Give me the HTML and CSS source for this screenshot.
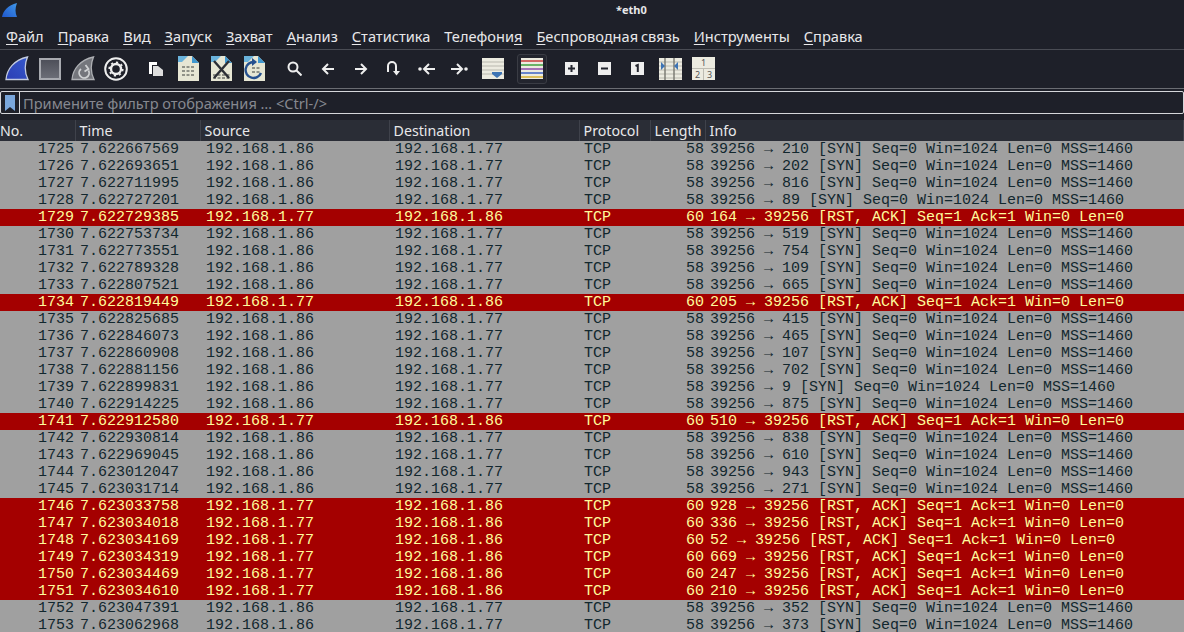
FILE: index.html
```html
<!DOCTYPE html>
<html lang="ru">
<head>
<meta charset="utf-8">
<title>*eth0</title>
<link rel="stylesheet" href="styles.css">
</head>
<body>
<div class="app">
  <header class="titlebar">
    <svg class="logo" width="16" height="15" viewBox="0 0 16 15"><defs><linearGradient id="lg" x1="0" y1="1" x2="1" y2="0"><stop offset="0" stop-color="#1f56cc"/><stop offset="1" stop-color="#3f97e8"/></linearGradient></defs><path d="M0 14C1 8 6 2 15 0C13 5 13 10 15 14Z" fill="url(#lg)"/></svg>
    <span class="title">*eth0</span>
  </header>
  <nav class="menubar">
    <span><u>Ф</u>айл</span><span><u>П</u>равка</span><span><u>В</u>ид</span><span><u>З</u>апуск</span><span><u>З</u>ахват</span><span><u>А</u>нализ</span><span><u>С</u>татистика</span><span>Телефони<u>я</u></span><span><u>Б</u>еспроводная связь</span><span><u>И</u>нструменты</span><span><u>С</u>правка</span>
  </nav>
  <div class="toolbar">
    <span class="tool"><svg width="24" height="25" viewBox="0 0 24 25"><defs><linearGradient id="fin" x1="0" y1="1" x2="1" y2="0"><stop offset="0" stop-color="#2c3fb4"/><stop offset="1" stop-color="#3558cc"/></linearGradient></defs><path d="M1 23.500C2 13 9 4 22.500 1C19.500 8 19.500 16 23 23.500Z" fill="url(#fin)" stroke="#c3cbe0" stroke-width="1.300"/></svg></span>
    <span class="tool"><svg width="22" height="22" viewBox="0 0 22 22"><defs><linearGradient id="stop" x1="0" y1="0" x2="0" y2="1"><stop offset="0" stop-color="#4c4e58"/><stop offset="1" stop-color="#6d6f78"/></linearGradient></defs><rect x="1" y="1" width="20" height="20" fill="url(#stop)" stroke="#a8aab0" stroke-width="2"/></svg></span>
    <span class="tool"><svg width="24" height="25" viewBox="0 0 24 25"><path d="M1 23.500C2 13 9 4 22.500 1C19.500 8 19.500 16 23 23.500Z" fill="#74767c" stroke="#aeb0b4" stroke-width="1.300"/><path d="M10 13a5 5 0 1 0 7.500 1.500M14.500 9l3 4-4 2.500" fill="none" stroke="#d0d2d4" stroke-width="1.800"/></svg></span>
    <span class="tool"><svg width="24" height="24" viewBox="0 0 24 24"><circle cx="12" cy="12" r="10.800" fill="none" stroke="#eee" stroke-width="2"/><circle cx="12" cy="12" r="5" fill="none" stroke="#eee" stroke-width="2.400"/><circle cx="12" cy="12" r="6.800" fill="none" stroke="#eee" stroke-width="1.600" stroke-dasharray="2.200 3.100"/></svg></span>
    <span class="tool sep"><svg width="16" height="16" viewBox="0 0 16 16"><path d="M1 1H9V4H4V13H1Z" fill="#fff"/><path d="M5 5H10L15 9V15H5Z" fill="#ddd"/></svg></span>
    <span class="tool"><svg width="21" height="25" viewBox="0 0 21 25"><path d="M0 0H14L21 7V25H0Z" fill="#e6e6d4"/><path d="M14 0L21 7H14Z" fill="#3f97cf"/><path d="M0 0H10L4 6H0Z" fill="#6ab3dc"/><path d="M4 11h13M4 15h13M4 19h13" stroke="#8f9187" stroke-width="2" stroke-dasharray="3 1.500"/></svg></span>
    <span class="tool"><svg width="21" height="25" viewBox="0 0 21 25"><path d="M0 0H14L21 7V25H0Z" fill="#e6e6d4"/><path d="M14 0L21 7H14Z" fill="#3f97cf"/><path d="M0 0H10L4 6H0Z" fill="#6ab3dc"/><path d="M2 19h17M2 22h17" stroke="#8f9187" stroke-width="2" stroke-dasharray="3 1.500"/><path d="M3 5L18 22M18 5L3 22" stroke="#2c2f36" stroke-width="2.400"/></svg></span>
    <span class="tool"><svg width="21" height="25" viewBox="0 0 21 25"><path d="M0 0H14L21 7V25H0Z" fill="#e6e6d4"/><path d="M14 0L21 7H14Z" fill="#3f97cf"/><path d="M0 0H10L4 6H0Z" fill="#6ab3dc"/><path d="M8 12h9M8 16h9" stroke="#8f9187" stroke-width="2" stroke-dasharray="3 1.500"/><path d="M10 6a8 8 0 1 0 7 11" fill="none" stroke="#25508f" stroke-width="2.400"/><path d="M8 2l5 4-5 4Z" fill="#25508f"/></svg></span>
    <span class="tool sep"><svg width="15" height="15" viewBox="0 0 15 15"><circle cx="6" cy="6" r="4.500" fill="none" stroke="#eee" stroke-width="2"/><path d="M9.500 9.500l5 5" stroke="#eee" stroke-width="2"/></svg></span>
    <span class="tool"><svg width="14" height="14" viewBox="0 0 14 14"><path d="M13 7H2M7 2L2 7l5 5" fill="none" stroke="#eee" stroke-width="2"/></svg></span>
    <span class="tool"><svg width="14" height="14" viewBox="0 0 14 14"><path d="M1 7H12M7 2l5 5-5 5" fill="none" stroke="#eee" stroke-width="2"/></svg></span>
    <span class="tool"><svg width="13" height="15" viewBox="0 0 13 15"><path d="M1 11V5a4 4 0 0 1 8 0v6" fill="none" stroke="#eee" stroke-width="2"/><path d="M6 10h7l-3.500 4.500Z" fill="#eee"/></svg></span>
    <span class="tool"><svg width="17" height="14" viewBox="0 0 17 14"><circle cx="2" cy="7" r="1.800" fill="#eee"/><path d="M17 7H6M11 2L6 7l5 5" fill="none" stroke="#eee" stroke-width="2"/></svg></span>
    <span class="tool"><svg width="17" height="14" viewBox="0 0 17 14"><circle cx="15" cy="7" r="1.800" fill="#eee"/><path d="M0 7H11M6 2l5 5-5 5" fill="none" stroke="#eee" stroke-width="2"/></svg></span>
    <span class="tool"><svg width="22" height="21" viewBox="0 0 22 21"><rect width="22" height="21" fill="#ecebe0"/><path d="M0 4h22M0 8h22M0 12h22M0 16h22" stroke="#b9b8ae"/><path d="M10 14h10v2l-5 4-5-4Z" fill="#3e74b4"/></svg></span>
    <span class="tool sep on"><svg width="22" height="21" viewBox="0 0 22 21"><rect width="22" height="21" fill="#ecebe0"/><path d="M0 3h22" stroke="#c83c3c" stroke-width="1.500"/><path d="M0 7h22" stroke="#3fa13f" stroke-width="1.500"/><path d="M0 11h22" stroke="#8c4aa8" stroke-width="1.500"/><path d="M0 15h22" stroke="#3c62c4" stroke-width="1.500"/><path d="M0 19h22" stroke="#d8b030" stroke-width="1.500"/></svg></span>
    <span class="tool sep"><svg width="13" height="13" viewBox="0 0 13 13"><rect width="13" height="13" fill="#eee"/><path d="M3 6.500h7M6.500 3v7" stroke="#23252e" stroke-width="2"/></svg></span>
    <span class="tool"><svg width="13" height="13" viewBox="0 0 13 13"><rect width="13" height="13" fill="#eee"/><path d="M3 6.500h7" stroke="#23252e" stroke-width="2"/></svg></span>
    <span class="tool"><svg width="13" height="13" viewBox="0 0 13 13"><rect width="13" height="13" fill="#eee"/><path d="M4.500 4L6.800 3V10" fill="none" stroke="#23252e" stroke-width="2"/></svg></span>
    <span class="tool"><svg width="23" height="22" viewBox="0 0 23 22"><rect width="23" height="22" fill="#ecebe0"/><path d="M0 4h23M0 8h23M0 12h23M0 16h23M0 20h23" stroke="#b9b8ae"/><path d="M6 0v22M15 0v22" stroke="#77776f" stroke-width="1.400"/><path d="M2 4l4 4-4 4ZM19 4l-4 4 4 4Z" fill="#3e74b4"/></svg></span>
    <span class="tool"><span class="panes"><span class="pane wide">1</span><span class="pane">2</span><span class="pane">3</span></span></span>
  </div>
  <div class="filter">
    <svg class="bookmark" width="12" height="18" viewBox="0 0 12 18"><path d="M1 1H11V17L6 13 1 17Z" fill="#7aa7dc"/></svg>
    <span class="placeholder">Примените фильтр отображения … &lt;Ctrl-/&gt;</span>
  </div>
  <div class="columns">
    <span class="hd">No.</span><span class="hd">Time</span><span class="hd">Source</span><span class="hd">Destination</span><span class="hd">Protocol</span><span class="hd">Length</span><span class="hd">Info</span>
  </div>
  <div class="packets">
    <div class="row"><span class="n">1725</span><span>7.622667569</span><span>192.168.1.86</span><span>192.168.1.77</span><span>TCP</span><span class="n">58</span><span>39256 → 210 [SYN] Seq=0 Win=1024 Len=0 MSS=1460</span></div>
    <div class="row"><span class="n">1726</span><span>7.622693651</span><span>192.168.1.86</span><span>192.168.1.77</span><span>TCP</span><span class="n">58</span><span>39256 → 202 [SYN] Seq=0 Win=1024 Len=0 MSS=1460</span></div>
    <div class="row"><span class="n">1727</span><span>7.622711995</span><span>192.168.1.86</span><span>192.168.1.77</span><span>TCP</span><span class="n">58</span><span>39256 → 816 [SYN] Seq=0 Win=1024 Len=0 MSS=1460</span></div>
    <div class="row"><span class="n">1728</span><span>7.622727201</span><span>192.168.1.86</span><span>192.168.1.77</span><span>TCP</span><span class="n">58</span><span>39256 → 89 [SYN] Seq=0 Win=1024 Len=0 MSS=1460</span></div>
    <div class="row rst"><span class="n">1729</span><span>7.622729385</span><span>192.168.1.77</span><span>192.168.1.86</span><span>TCP</span><span class="n">60</span><span>164 → 39256 [RST, ACK] Seq=1 Ack=1 Win=0 Len=0</span></div>
    <div class="row"><span class="n">1730</span><span>7.622753734</span><span>192.168.1.86</span><span>192.168.1.77</span><span>TCP</span><span class="n">58</span><span>39256 → 519 [SYN] Seq=0 Win=1024 Len=0 MSS=1460</span></div>
    <div class="row"><span class="n">1731</span><span>7.622773551</span><span>192.168.1.86</span><span>192.168.1.77</span><span>TCP</span><span class="n">58</span><span>39256 → 754 [SYN] Seq=0 Win=1024 Len=0 MSS=1460</span></div>
    <div class="row"><span class="n">1732</span><span>7.622789328</span><span>192.168.1.86</span><span>192.168.1.77</span><span>TCP</span><span class="n">58</span><span>39256 → 109 [SYN] Seq=0 Win=1024 Len=0 MSS=1460</span></div>
    <div class="row"><span class="n">1733</span><span>7.622807521</span><span>192.168.1.86</span><span>192.168.1.77</span><span>TCP</span><span class="n">58</span><span>39256 → 665 [SYN] Seq=0 Win=1024 Len=0 MSS=1460</span></div>
    <div class="row rst"><span class="n">1734</span><span>7.622819449</span><span>192.168.1.77</span><span>192.168.1.86</span><span>TCP</span><span class="n">60</span><span>205 → 39256 [RST, ACK] Seq=1 Ack=1 Win=0 Len=0</span></div>
    <div class="row"><span class="n">1735</span><span>7.622825685</span><span>192.168.1.86</span><span>192.168.1.77</span><span>TCP</span><span class="n">58</span><span>39256 → 415 [SYN] Seq=0 Win=1024 Len=0 MSS=1460</span></div>
    <div class="row"><span class="n">1736</span><span>7.622846073</span><span>192.168.1.86</span><span>192.168.1.77</span><span>TCP</span><span class="n">58</span><span>39256 → 465 [SYN] Seq=0 Win=1024 Len=0 MSS=1460</span></div>
    <div class="row"><span class="n">1737</span><span>7.622860908</span><span>192.168.1.86</span><span>192.168.1.77</span><span>TCP</span><span class="n">58</span><span>39256 → 107 [SYN] Seq=0 Win=1024 Len=0 MSS=1460</span></div>
    <div class="row"><span class="n">1738</span><span>7.622881156</span><span>192.168.1.86</span><span>192.168.1.77</span><span>TCP</span><span class="n">58</span><span>39256 → 702 [SYN] Seq=0 Win=1024 Len=0 MSS=1460</span></div>
    <div class="row"><span class="n">1739</span><span>7.622899831</span><span>192.168.1.86</span><span>192.168.1.77</span><span>TCP</span><span class="n">58</span><span>39256 → 9 [SYN] Seq=0 Win=1024 Len=0 MSS=1460</span></div>
    <div class="row"><span class="n">1740</span><span>7.622914225</span><span>192.168.1.86</span><span>192.168.1.77</span><span>TCP</span><span class="n">58</span><span>39256 → 875 [SYN] Seq=0 Win=1024 Len=0 MSS=1460</span></div>
    <div class="row rst"><span class="n">1741</span><span>7.622912580</span><span>192.168.1.77</span><span>192.168.1.86</span><span>TCP</span><span class="n">60</span><span>510 → 39256 [RST, ACK] Seq=1 Ack=1 Win=0 Len=0</span></div>
    <div class="row"><span class="n">1742</span><span>7.622930814</span><span>192.168.1.86</span><span>192.168.1.77</span><span>TCP</span><span class="n">58</span><span>39256 → 838 [SYN] Seq=0 Win=1024 Len=0 MSS=1460</span></div>
    <div class="row"><span class="n">1743</span><span>7.622969045</span><span>192.168.1.86</span><span>192.168.1.77</span><span>TCP</span><span class="n">58</span><span>39256 → 610 [SYN] Seq=0 Win=1024 Len=0 MSS=1460</span></div>
    <div class="row"><span class="n">1744</span><span>7.623012047</span><span>192.168.1.86</span><span>192.168.1.77</span><span>TCP</span><span class="n">58</span><span>39256 → 943 [SYN] Seq=0 Win=1024 Len=0 MSS=1460</span></div>
    <div class="row"><span class="n">1745</span><span>7.623031714</span><span>192.168.1.86</span><span>192.168.1.77</span><span>TCP</span><span class="n">58</span><span>39256 → 271 [SYN] Seq=0 Win=1024 Len=0 MSS=1460</span></div>
    <div class="row rst"><span class="n">1746</span><span>7.623033758</span><span>192.168.1.77</span><span>192.168.1.86</span><span>TCP</span><span class="n">60</span><span>928 → 39256 [RST, ACK] Seq=1 Ack=1 Win=0 Len=0</span></div>
    <div class="row rst"><span class="n">1747</span><span>7.623034018</span><span>192.168.1.77</span><span>192.168.1.86</span><span>TCP</span><span class="n">60</span><span>336 → 39256 [RST, ACK] Seq=1 Ack=1 Win=0 Len=0</span></div>
    <div class="row rst"><span class="n">1748</span><span>7.623034169</span><span>192.168.1.77</span><span>192.168.1.86</span><span>TCP</span><span class="n">60</span><span>52 → 39256 [RST, ACK] Seq=1 Ack=1 Win=0 Len=0</span></div>
    <div class="row rst"><span class="n">1749</span><span>7.623034319</span><span>192.168.1.77</span><span>192.168.1.86</span><span>TCP</span><span class="n">60</span><span>669 → 39256 [RST, ACK] Seq=1 Ack=1 Win=0 Len=0</span></div>
    <div class="row rst"><span class="n">1750</span><span>7.623034469</span><span>192.168.1.77</span><span>192.168.1.86</span><span>TCP</span><span class="n">60</span><span>247 → 39256 [RST, ACK] Seq=1 Ack=1 Win=0 Len=0</span></div>
    <div class="row rst"><span class="n">1751</span><span>7.623034610</span><span>192.168.1.77</span><span>192.168.1.86</span><span>TCP</span><span class="n">60</span><span>210 → 39256 [RST, ACK] Seq=1 Ack=1 Win=0 Len=0</span></div>
    <div class="row"><span class="n">1752</span><span>7.623047391</span><span>192.168.1.86</span><span>192.168.1.77</span><span>TCP</span><span class="n">58</span><span>39256 → 352 [SYN] Seq=0 Win=1024 Len=0 MSS=1460</span></div>
    <div class="row"><span class="n">1753</span><span>7.623062968</span><span>192.168.1.86</span><span>192.168.1.77</span><span>TCP</span><span class="n">58</span><span>39256 → 373 [SYN] Seq=0 Win=1024 Len=0 MSS=1460</span></div>
  </div>
</div>
</body>
</html>
```
FILE: styles.css
```css
* { box-sizing: border-box; }
html, body { margin: 0; height: 100%; overflow: hidden; background: #1e2029; }
.app { width: 1184px; height: 632px; display: flex; flex-direction: column; overflow: hidden; font-family: "Noto Sans", sans-serif; color: #e8e8ea; }
.titlebar { height: 25px; flex: none; position: relative; padding: 3px 0 0 2px; background: #1e2029; }
.logo { display: block; }
.title { position: absolute; left: 616px; top: 2px; font-size: 11px; line-height: 15px; font-weight: 700; color: #e8e8ea; }
.menubar { height: 25px; flex: none; display: flex; align-items: center; gap: 14px; padding: 0 0 3px 6px; font-size: 14.6px; word-spacing: -1px; border-bottom: 1px solid #4a4c54; }
.menubar u { text-underline-offset: 2px; }
.toolbar { height: 39px; flex: none; display: flex; align-items: center; padding-bottom: 1px; border-bottom: 1px solid #6a6c72; }
.tool { flex: none; width: 33px; height: 30px; display: flex; align-items: center; justify-content: center; }
.sep { margin-left: 7px; }
.on { width: 30px; margin-left: 8px; margin-right: 1px; border: 1px solid #3a3c44; border-radius: 3px; background: #23252e; }
.filter { height: 23px; flex: none; margin-top: 2px; display: flex; align-items: center; border: 1px solid #d5d6da; border-radius: 2px; background: #1e2029; }
.bookmark { margin: 0 3px; flex: none; }
.placeholder { font-size: 14.6px; padding-left: 3px; color: #868890; border-left: 1px solid #d5d6da; height: 100%; line-height: 23px; white-space: nowrap; }
.panes { display: grid; grid-template-columns: 11px 11px; grid-template-rows: 11px 11px; gap: 1px; width: 23px; height: 23px; background: #bdbcb2; }
.pane { background: #ecebe0; color: #555; font-size: 9px; text-align: center; line-height: 11px; }
.pane.wide { grid-column: 1 / 3; }
.columns { height: 21px; flex: none; margin-top: 6px; display: grid; grid-template-columns: 76px 125px 189px 190px 71px 55px 1fr; background: #2a2d36; font-size: 14.2px; line-height: 21px; color: #e8e8ea; }
.hd { padding-left: 3.6px; border-right: 1px solid #3f424b; white-space: nowrap; }
.hd:first-child { padding-left: 0; }
.packets { flex: 1; min-height: 0; overflow: hidden; background: #a0a0a0; }
.row { height: 17px; display: grid; grid-template-columns: 76px 127px 189px 189px 71px 55px 1fr; font-family: "Liberation Mono", monospace; font-size: 15px; line-height: 17px; color: #12272e; white-space: pre; background: #a0a0a0; }
.row > span { padding-left: 3px; }
.row > span:nth-child(2) { padding-left: 4px; }
.row > .n { padding-left: 0; padding-right: 2px; text-align: right; }
.row > .n:nth-child(6) { padding-right: 3px; }
.rst { background: #a40000; color: #fffc9c; }
```
